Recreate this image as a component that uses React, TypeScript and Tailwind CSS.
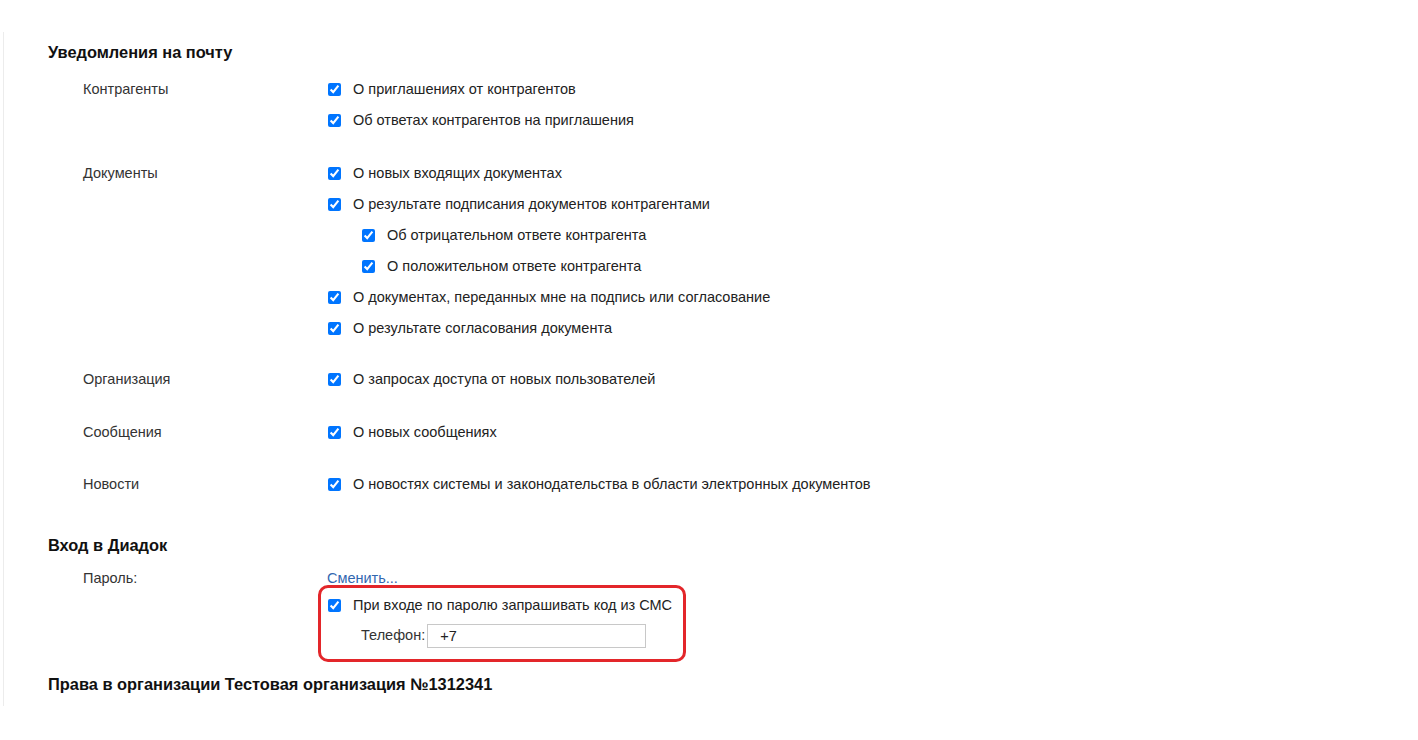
import React, { useState } from 'react';

interface Option {
  id: string;
  text: string;
  nested?: boolean;
}

interface Group {
  label: string;
  gap: string;
  options: Option[];
}

const groups: Group[] = [
  {
    label: 'Контрагенты',
    gap: '',
    options: [
      { id: 'inv', text: 'О приглашениях от контрагентов' },
      { id: 'inv-ans', text: 'Об ответах контрагентов на приглашения' },
    ],
  },
  {
    label: 'Документы',
    gap: 'mt-[22px]',
    options: [
      { id: 'in-docs', text: 'О новых входящих документах' },
      { id: 'sign-res', text: 'О результате подписания документов контрагентами' },
      { id: 'neg', text: 'Об отрицательном ответе контрагента', nested: true },
      { id: 'pos', text: 'О положительном ответе контрагента', nested: true },
      { id: 'to-me', text: 'О документах, переданных мне на подпись или согласование' },
      { id: 'approve', text: 'О результате согласования документа' },
    ],
  },
  {
    label: 'Организация',
    gap: 'mt-[20px]',
    options: [{ id: 'access', text: 'О запросах доступа от новых пользователей' }],
  },
  {
    label: 'Сообщения',
    gap: 'mt-[22px]',
    options: [{ id: 'msg', text: 'О новых сообщениях' }],
  },
  {
    label: 'Новости',
    gap: 'mt-[21px]',
    options: [{ id: 'news', text: 'О новостях системы и законодательства в области электронных документов' }],
  },
];

const Check: React.FC<{ checked: boolean; onChange: () => void; label: string }> = ({ checked, onChange, label }) => (
  <label className="flex items-center h-[31px] cursor-pointer">
    <input
      type="checkbox"
      checked={checked}
      onChange={onChange}
      className="w-[13px] h-[13px] accent-[#0075ff] shrink-0"
    />
    <span className="ml-[12px]">{label}</span>
  </label>
);

const App: React.FC = () => {
  const [checked, setChecked] = useState<Record<string, boolean>>(() => {
    const all: Record<string, boolean> = { sms: true };
    groups.forEach((g) => g.options.forEach((o) => (all[o.id] = true)));
    return all;
  });
  const [phone, setPhone] = useState('+7');

  const toggle = (id: string) => setChecked((prev) => ({ ...prev, [id]: !prev[id] }));

  return (
    <div className="min-h-[740px] bg-white text-[14.5px] text-[#222] font-['Liberation_Sans',Arial,sans-serif]">
      <div className="h-[32px]" />
      <div className="ml-[3px] h-[674px] border-l border-[#ececec] pl-[44px] overflow-hidden">
        <h2 className="pt-[10px] text-[16.4px] leading-[20px] font-bold text-[#111]">Уведомления на почту</h2>

        <div className="mt-[12px]">
          {groups.map((g) => (
            <div key={g.label} className={`flex pl-[35px] ${g.gap}`}>
              <div className="w-[245px] shrink-0 h-[31px] flex items-center text-[#333]">{g.label}</div>
              <div>
                {g.options.map((o) => (
                  <div key={o.id} className={o.nested ? 'pl-[34px]' : ''}>
                    <Check checked={!!checked[o.id]} onChange={() => toggle(o.id)} label={o.text} />
                  </div>
                ))}
              </div>
            </div>
          ))}
        </div>

        <h2 className="mt-[35px] text-[16.4px] leading-[20px] font-bold text-[#111]">Вход в Диадок</h2>

        <div className="mt-[14px] flex pl-[35px]">
          <div className="w-[244px] shrink-0 h-[20px] flex items-center text-[#333]">Пароль:</div>
          <div className="relative">
            <a href="#" className="h-[20px] flex items-center text-[#3267b0]">Сменить...</a>
            <div className="pl-[1px] pt-[1px]">
              <Check checked={!!checked.sms} onChange={() => toggle('sms')} label="При входе по паролю запрашивать код из СМС" />
              <div className="flex items-center pl-[33px] mt-[3px]">
                <span className="text-[#333]">Телефон:</span>
                <input
                  value={phone}
                  onChange={(e) => setPhone(e.target.value)}
                  className="ml-[2px] w-[219px] h-[24px] border border-[#c8c8c8] pl-[12px] outline-none text-[#222]"
                />
              </div>
            </div>
            <div className="pointer-events-none absolute left-[-9px] top-[16px] w-[368px] h-[77px] border-[3px] border-[#e3262a] rounded-[10px]" />
          </div>
        </div>

        <h2 className="mt-[26px] text-[16.4px] leading-[20px] font-bold text-[#111]">
          Права в организации Тестовая организация №1312341
        </h2>
      </div>
    </div>
  );
};

export default App;
